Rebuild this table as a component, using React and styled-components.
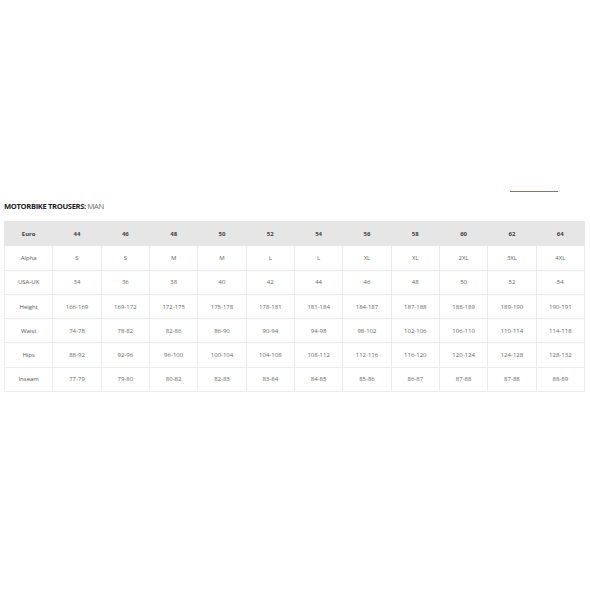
import React from "react";
import styled, { createGlobalStyle } from "styled-components";

const GlobalStyle = createGlobalStyle`
  html, body {
    margin: 0;
    padding: 0;
    background: #ffffff;
  }
  body {
    font-family: "Open Sans", "Liberation Sans", sans-serif;
  }
`;

const sizes = [
  { label: "Euro", values: ["44", "46", "48", "50", "52", "54", "56", "58", "60", "62", "64"] },
  { label: "Alpha", values: ["S", "S", "M", "M", "L", "L", "XL", "XL", "2XL", "3XL", "4XL"] },
  { label: "USA-UK", values: ["34", "36", "38", "40", "42", "44", "46", "48", "50", "52", "54"] },
  { label: "Height", values: ["166-169", "169-172", "172-175", "175-178", "178-181", "181-184", "184-187", "187-188", "188-189", "189-190", "190-191"] },
  { label: "Waist", values: ["74-78", "78-82", "82-86", "86-90", "90-94", "94-98", "98-102", "102-106", "106-110", "110-114", "114-118"] },
  { label: "Hips", values: ["88-92", "92-96", "96-100", "100-104", "104-108", "108-112", "112-116", "116-120", "120-124", "124-128", "128-132"] },
  { label: "Inseam", values: ["77-79", "79-80", "80-82", "82-83", "83-84", "84-85", "85-86", "86-87", "87-88", "87-88", "88-89"] },
];

function App() {
  const [head, ...rows] = sizes;
  return (
    <Page>
      <GlobalStyle />
      <TopBar>
        <Accent />
      </TopBar>
      <Title>
        <strong>MOTORBIKE TROUSERS:</strong> MAN
      </Title>
      <SizeTable>
        <thead>
          <Row header>
            <Cell as="th" header>{head.label}</Cell>
            {head.values.map((v, i) => (
              <Cell as="th" header key={i}>{v}</Cell>
            ))}
          </Row>
        </thead>
        <tbody>
          {rows.map((r) => (
            <Row key={r.label}>
              <Cell label>{r.label}</Cell>
              {r.values.map((v, i) => (
                <Cell key={i}>{v}</Cell>
              ))}
            </Row>
          ))}
        </tbody>
      </SizeTable>
    </Page>
  );
}

export default App;

const Page = styled.div`
  width: 590px;
  height: 590px;
  box-sizing: border-box;
  padding: 190px 5px 0 4px;
`;

const TopBar = styled.div`
  display: flex;
  justify-content: flex-end;
  padding-right: 27px;
  height: 9px;
`;

const Accent = styled.div`
  width: 48px;
  height: 1px;
  margin-top: 1px;
  background: #c45a5e;
`;

const Title = styled.div`
  font-size: 7.6px;
  line-height: 14px;
  color: #666;
  letter-spacing: -0.35px;
  margin-bottom: 8px;
  strong {
    color: #222;
    font-weight: 700;
  }
`;

const SizeTable = styled.table`
  width: 581px;
  border-collapse: collapse;
  table-layout: fixed;
`;

const Row = styled.tr`
  height: 24.3px;
  background: ${(p) => (p.header ? "#e6e6e6" : "#ffffff")};
`;

const Cell = styled.td`
  padding: 0;
  text-align: center;
  vertical-align: middle;
  font-size: 6px;
  font-weight: ${(p) => (p.header ? 700 : 400)};
  color: ${(p) => (p.header ? "#444" : p.label ? "#555" : "#666")};
  border: 1px solid ${(p) => (p.header ? "#e6e6e6" : "#ececec")};
  white-space: nowrap;
`;
